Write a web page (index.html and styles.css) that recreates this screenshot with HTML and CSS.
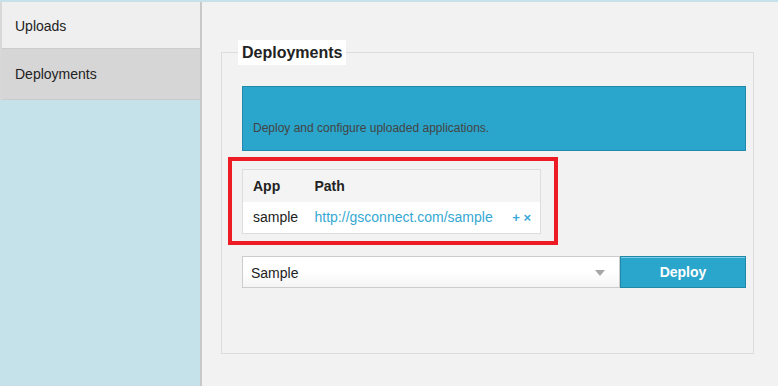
FILE: index.html
```html
<!DOCTYPE html>
<html>
<head>
  <meta charset="UTF-8">
  <meta name="viewport" content="width=device-width, initial-scale=1.0">
  <title>Deployments</title>
  <link rel="stylesheet" href="styles.css">
</head>
<body>

<div id="app">
  <div class="sidebar">
    <ul class="menu">
      <li class="menu__item">Uploads</li>
      <li class="menu__item menu__item--active">Deployments</li>
    </ul>
  </div>
  <div class="main">
    <fieldset class="panel">
      <legend class="panel__title">Deployments</legend>
      <div class="notice">Deploy and configure uploaded applications.</div>
      <div class="highlight">
        <table class="apps">
          <thead>
            <tr>
              <th class="apps__app">App</th>
              <th>Path</th>
              <th></th>
            </tr>
          </thead>
          <tbody>
            <tr>
              <td class="apps__app">sample</td>
              <td><a class="apps__link" href="#">http://gsconnect.com/sample</a></td>
              <td class="apps__actions">+ &times;</td>
            </tr>
          </tbody>
        </table>
      </div>
      <div class="deploy">
        <div class="deploy__select">
          <span>Sample</span>
          <span class="deploy__arrow"></span>
        </div>
        <button class="deploy__button">Deploy</button>
      </div>
    </fieldset>
  </div>
</div>

</body>
</html>
```

FILE: styles.css
```css
    html, body {
      margin: 0;
      padding: 0
    }
    *, *:before, *:after {
      box-sizing: border-box;
    }
    body {
      background-color: #c5e2ea;
      font-family: "Liberation Sans", Arial, sans-serif;
      color: #222222;
    }
    #app {
      display: flex;
      flex-direction: row;
      height: 386px;
      padding-top: 2px;
    }
    .sidebar {
      width: 200px;
      flex: none;
    }
    .menu {
      list-style: none;
      margin: 0;
      padding: 0;
      border-left: 2px solid #d8d8d8;
    }
    .menu__item {
      background-color: #efefef;
      border-bottom: 1px solid #cccccc;
      font-size: 14px;
      height: 47px;
      line-height: 48px;
      padding-left: 13px;
    }
    .menu__item--active {
      background-color: #d6d6d6;
      height: 51px;
      line-height: 50px;
    }
    .main {
      flex: 1;
      background-color: #f2f2f2;
      border-left: 2px solid #c8c8c8;
      padding: 0 24px 0 19px;
    }
    .panel {
      margin: 38px 0 0 0;
      border: 1px solid #dcdcdc;
      padding: 21px 7px 64px 20px;
      height: 314px;
    }
    .panel__title {
      background-color: #ffffff;
      font-size: 16px;
      font-weight: bold;
      line-height: 17px;
      padding: 4px 4px;
      margin-left: -4px;
    }
    .notice {
      background-color: #2aa5cb;
      border: 1px solid #2389aa;
      color: #444444;
      font-size: 12px;
      padding: 34px 10px 15px 10px;
    }
    .highlight {
      position: relative;
      width: 299px;
      margin: 18px 0 22px 0;
    }
    .highlight:after {
      content: "";
      position: absolute;
      left: -14px;
      top: -12px;
      right: -17px;
      bottom: -11px;
      border: 4px solid #ed1c24;
    }
    .apps {
      width: 299px;
      border: 1px solid #dddddd;
      border-collapse: collapse;
      font-size: 14px;
      text-align: left;
    }
    .apps th,
    .apps td {
      height: 32px;
      padding: 0;
    }
    .apps thead tr {
      background-color: #f4f4f4;
    }
    .apps tbody tr {
      background-color: #ffffff;
    }
    .apps__app {
      width: 72px;
      padding-left: 10px !important;
    }
    .apps__link {
      color: #35a8d2;
      text-decoration: none;
    }
    .apps__actions {
      color: #3aa8d8;
      font-size: 13px;
      font-weight: bold;
      text-align: right;
      padding-right: 9px !important;
    }
    .deploy {
      display: flex;
      flex-direction: row;
      height: 32px;
    }
    .deploy__select {
      width: 378px;
      display: flex;
      align-items: center;
      justify-content: space-between;
      background: linear-gradient(#ffffff, #ffffff 50%, #f4f4f4);
      border: 1px solid #cccccc;
      font-size: 14px;
      padding: 1px 14px 0 8px;
    }
    .deploy__arrow {
      width: 0;
      height: 0;
      border-left: 5px solid transparent;
      border-right: 5px solid transparent;
      border-top: 6px solid #a6a6a6;
    }
    .deploy__button {
      width: 126px;
      background-color: #2aa5cb;
      border: 1px solid #2288a8;
      box-shadow: inset 0 1px 0 #7ccde6;
      color: #ffffff;
      font-family: "Liberation Sans", Arial, sans-serif;
      font-size: 14px;
      font-weight: bold;
      padding: 0;
    }
```
